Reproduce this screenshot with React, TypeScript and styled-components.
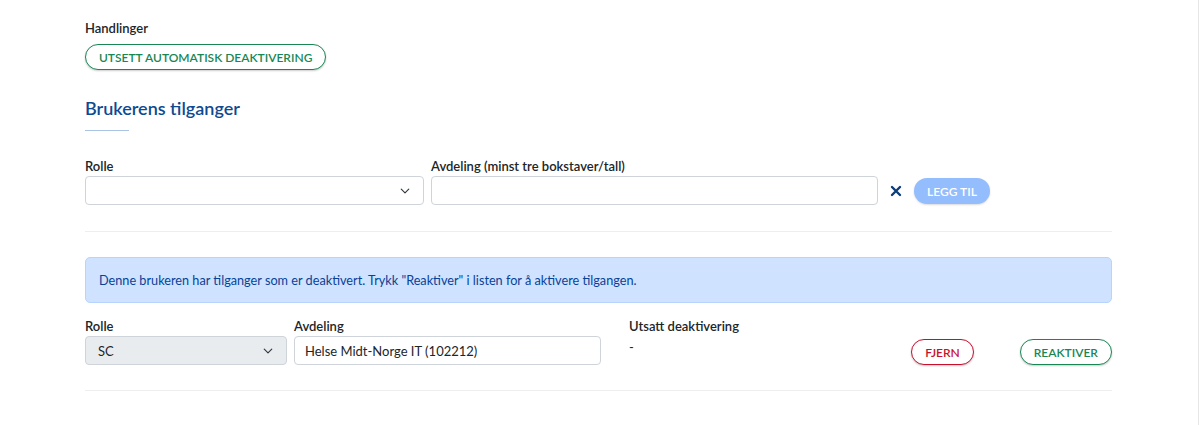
import React from "react";
import styled, { createGlobalStyle } from "styled-components";

const Global = createGlobalStyle`
  html, body { margin: 0; padding: 0; background: #fff; }
  body { font-family: "Segoe UI", Lato, "Noto Sans", sans-serif; color: #212529; }
  * { box-sizing: border-box; }
`;

const Page = styled.div`
  width: 1199px;
  height: 425px;
  border-right: 1px solid #e6e6e6;
  padding: 20px 0 0 85px;
`;

const Content = styled.div`
  width: 1027px;
  display: flex;
  flex-direction: column;
`;

const Label = styled.div`
  font-size: 13px;
  font-weight: 600;
  line-height: 16px;
  margin-bottom: 2px;
`;

const PillButton = styled.button<{ $tone: "green" | "red" }>`
  font-family: inherit;
  height: 26px;
  padding: 0 13px;
  border-radius: 13px;
  background: #fff;
  border: 1px solid ${(p) => (p.$tone === "green" ? "#198754" : "#c8102e")};
  color: ${(p) => (p.$tone === "green" ? "#198754" : "#c8102e")};
  font-size: 12px;
  font-weight: 600;
  text-transform: uppercase;
  box-shadow: 0 1px 2px rgba(0, 0, 0, 0.2);
  cursor: pointer;
`;

const ActionBlock = styled.div`
  display: flex;
  flex-direction: column;
  align-items: flex-start;
  gap: 6px;
`;

const Heading = styled.h2`
  margin: 26px 0 0;
  font-size: 18px;
  font-weight: 600;
  line-height: 24px;
  color: #0d4a92;
`;

const HeadingRule = styled.div`
  width: 44px;
  height: 1px;
  background: #a9c4e4;
  margin-top: 10px;
`;

const FormRow = styled.div`
  display: flex;
  align-items: flex-end;
  gap: 7px;
  margin-top: 27px;
`;

const Field = styled.div<{ $w: number; $ml?: number }>`
  width: ${(p) => p.$w}px;
  margin-left: ${(p) => p.$ml ?? 0}px;
  display: flex;
  flex-direction: column;
`;

const SelectBox = styled.div<{ $disabled?: boolean }>`
  height: 29px;
  border: 1px solid #ced4da;
  border-radius: 4px;
  background: ${(p) => (p.$disabled ? "#e9ecef" : "#fff")};
  display: flex;
  align-items: center;
  justify-content: space-between;
  padding: 0 12px 0 12px;
  font-size: 13px;
`;

const InputBox = styled.div`
  height: 29px;
  border: 1px solid #ced4da;
  border-radius: 4px;
  background: #fff;
  display: flex;
  align-items: center;
  padding: 0 10px;
  font-size: 13px;
`;

const Chevron = () => (
  <svg width="12" height="12" viewBox="0 0 16 16" fill="none">
    <path d="M3 5.5l5 5 5-5" stroke="#343a40" strokeWidth="1.6" strokeLinecap="round" strokeLinejoin="round" />
  </svg>
);

const ClearIcon = styled.span`
  display: flex;
  align-items: center;
  height: 29px;
  margin-left: 5px;
  margin-right: 5px;
`;

const AddButton = styled.button`
  font-family: inherit;
  height: 26px;
  margin-bottom: 1px;
  padding: 0 13px;
  border-radius: 13px;
  border: none;
  background: #93bdfd;
  color: #fff;
  font-size: 12px;
  font-weight: 600;
  box-shadow: 0 1px 2px rgba(0, 0, 0, 0.15);
`;

const Rule = styled.hr<{ $mt?: number }>`
  border: none;
  border-top: 1px solid #eceef0;
  margin: ${(p) => p.$mt ?? 0}px 0 0;
`;

const Alert = styled.div`
  margin-top: 25px;
  height: 46px;
  background: #cfe2ff;
  border: 1px solid #b6d4fe;
  border-radius: 5px;
  color: #084298;
  font-size: 12.7px;
  display: flex;
  align-items: center;
  padding: 0 13px;
`;

const AccessRow = styled.div`
  display: flex;
  align-items: flex-start;
  margin-top: 15px;
  margin-bottom: 25px;
`;

const Dash = styled.div`
  font-size: 13px;
  height: 29px;
  line-height: 16px;
  padding-top: 3px;
`;

const Buttons = styled.div`
  margin-left: auto;
  display: flex;
  gap: 46px;
  padding-top: 21px;
`;

export default function App() {
  return (
    <>
      <Global />
      <Page>
        <Content>
          <ActionBlock>
            <Label>Handlinger</Label>
            <PillButton $tone="green">Utsett automatisk deaktivering</PillButton>
          </ActionBlock>
          <Heading>Brukerens tilganger</Heading>
          <HeadingRule />
          <FormRow>
            <Field $w={339}>
              <Label>Rolle</Label>
              <SelectBox>
                <span />
                <Chevron />
              </SelectBox>
            </Field>
            <Field $w={447}>
              <Label>Avdeling (minst tre bokstaver/tall)</Label>
              <InputBox />
            </Field>
            <ClearIcon>
              <svg width="12" height="12" viewBox="0 0 12 12">
                <path d="M2 2l8 8M10 2l-8 8" stroke="#0b3d78" strokeWidth="2.4" strokeLinecap="round" />
              </svg>
            </ClearIcon>
            <AddButton>LEGG TIL</AddButton>
          </FormRow>
          <Rule $mt={26} />
          <Alert>
            Denne brukeren har tilganger som er deaktivert. Trykk "Reaktiver" i listen for å aktivere tilgangen.
          </Alert>
          <AccessRow>
            <Field $w={202}>
              <Label>Rolle</Label>
              <SelectBox $disabled>
                <span>SC</span>
                <Chevron />
              </SelectBox>
            </Field>
            <Field $w={307} $ml={7}>
              <Label>Avdeling</Label>
              <InputBox>Helse Midt-Norge IT (102212)</InputBox>
            </Field>
            <Field $w={200} $ml={28}>
              <Label>Utsatt deaktivering</Label>
              <Dash>-</Dash>
            </Field>
            <Buttons>
              <PillButton $tone="red">Fjern</PillButton>
              <PillButton $tone="green">Reaktiver</PillButton>
            </Buttons>
          </AccessRow>
          <Rule />
        </Content>
      </Page>
    </>
  );
}
